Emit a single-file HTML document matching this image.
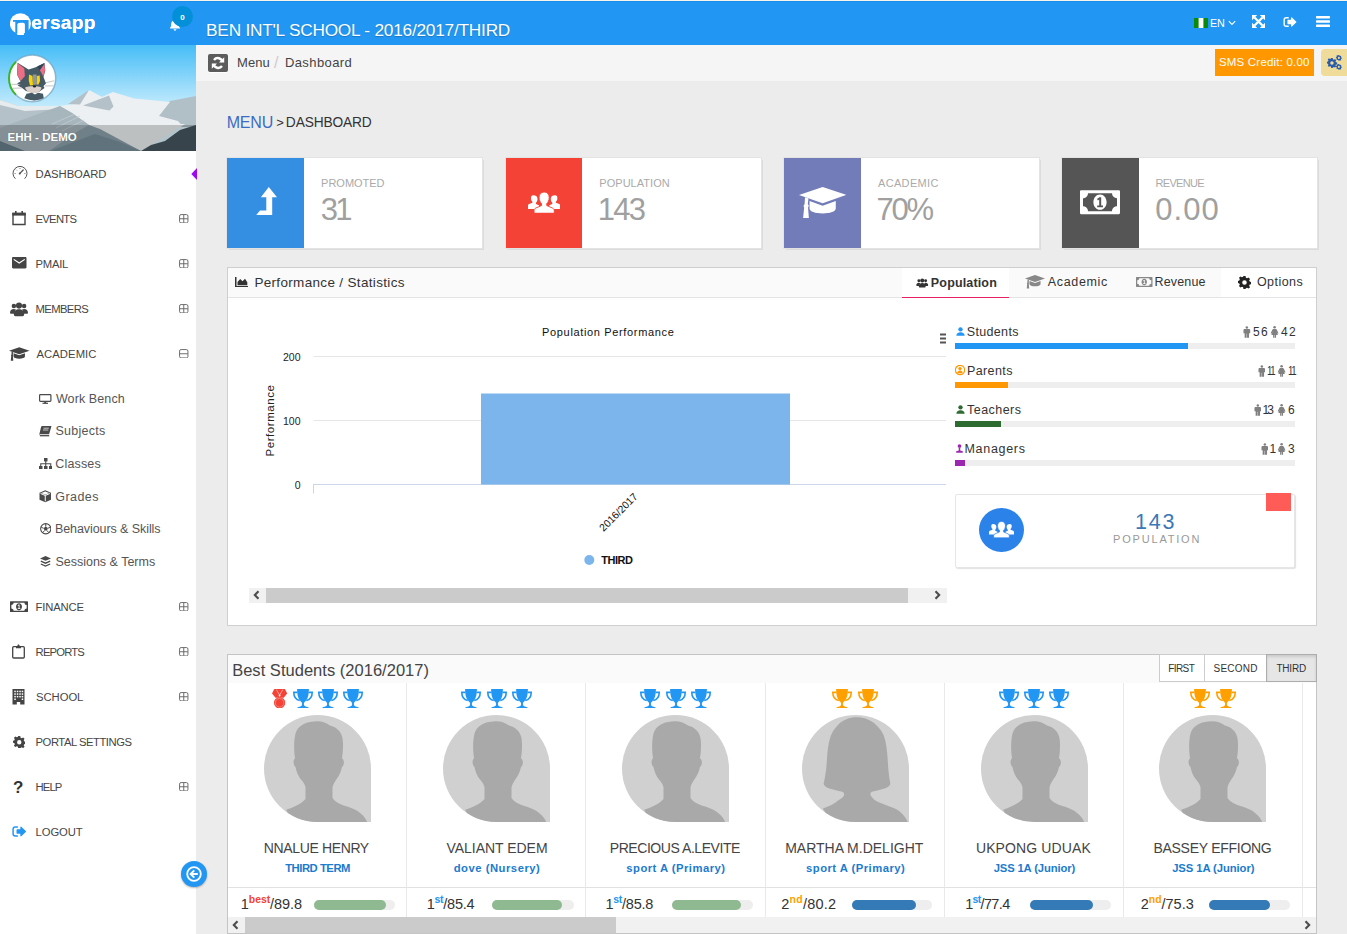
<!DOCTYPE html>
<html lang="en"><head><meta charset="utf-8"><title>Nersapp - Dashboard</title>
<style>
html,body{margin:0;padding:0}
body{width:1347px;height:934px;overflow:hidden;position:relative;background:#ececec;font-family:"Liberation Sans",sans-serif;}
#app{position:absolute;left:0;top:0;width:1347px;height:934px;overflow:hidden}
.t{position:absolute;white-space:nowrap;}
</style></head>
<body><div id="app">
<div style="position:absolute;left:196px;top:45px;width:1151px;height:36px;background:#f5f5f5;"></div>
<div style="position:absolute;left:208px;top:54px;width:20px;height:18px;background:#5c5c5c;border-radius:2px;box-shadow:0 1px 0 rgba(255,255,255,.9);"><svg width="20" height="18" viewBox="0 0 20 18" style="position:absolute;left:0;top:0"><g fill="none" stroke="#fff" stroke-width="2.400"><path d="M14.600 8A4.900 4.900 0 006 5.900"/><path d="M5.400 10a4.900 4.900 0 008.600 2.100"/></g><path d="M16.200 3.300v5.200H11zM3.800 14.700V9.500H9z" fill="#fff"/></svg></div>
<span class="t" style="left:236.93px;top:53.50px;font-size:13px;line-height:18px;color:#444;letter-spacing:0.137px;">Menu</span>
<span class="t" style="left:274.00px;top:51.50px;font-size:16px;line-height:22px;color:#ccc;">/</span>
<span class="t" style="left:284.93px;top:53.50px;font-size:13px;line-height:18px;color:#444;letter-spacing:0.413px;">Dashboard</span>
<div style="position:absolute;left:1215px;top:49px;width:99px;height:27px;background:#ff9800;"></div>
<span class="t" style="left:1218.98px;top:54.00px;font-size:11.5px;line-height:16px;color:#fff;letter-spacing:0.194px;">SMS Credit: 0.00</span>
<div style="position:absolute;left:1321px;top:49px;width:26px;height:27px;background:#f0dc9a;border-radius:4px 0 0 4px;"></div>
<svg style="position:absolute;left:1326.5px;top:55px;" width="16" height="15" viewBox="0 0 16 15"><g transform="translate(0,3) scale(.62)"><path fill="#2a5caa" fill-rule="evenodd" d="M6.700 0h2.600l.4 2.100c.5.200 1 .4 1.400.7l1.900-1 1.800 1.800-1.100 1.800c.3.500.5 1 .7 1.500l2 .5v2.500l-2 .5c-.2.500-.4 1-.7 1.500l1.100 1.800-1.800 1.800-1.900-1c-.4.300-.9.500-1.400.7L9.300 16H6.700l-.4-2.100c-.5-.2-1-.4-1.400-.7l-1.900 1-1.800-1.800 1.100-1.800c-.3-.5-.5-1-.7-1.500l-2-.5V6.100l2-.5c.2-.5.400-1 .7-1.500L1.200 2.300 3 .5l1.900 1c.4-.3.900-.5 1.400-.7zM8 5.200a2.800 2.800 0 100 5.600 2.800 2.800 0 000-5.600z"/></g><g transform="translate(9,0) scale(.36)"><path fill="#2a5caa" fill-rule="evenodd" d="M6.700 0h2.600l.4 2.100c.5.200 1 .4 1.400.7l1.900-1 1.800 1.800-1.100 1.800c.3.500.5 1 .7 1.500l2 .5v2.500l-2 .5c-.2.500-.4 1-.7 1.500l1.100 1.800-1.800 1.800-1.900-1c-.4.300-.9.500-1.400.7L9.300 16H6.700l-.4-2.100c-.5-.2-1-.4-1.400-.7l-1.900 1-1.800-1.800 1.100-1.800c-.3-.5-.5-1-.7-1.500l-2-.5V6.100l2-.5c.2-.5.400-1 .7-1.500L1.200 2.300 3 .5l1.900 1c.4-.3.900-.5 1.400-.7zM8 5.200a2.800 2.800 0 100 5.600 2.800 2.800 0 000-5.600z"/></g><g transform="translate(9,9) scale(.36)"><path fill="#2a5caa" fill-rule="evenodd" d="M6.700 0h2.600l.4 2.100c.5.200 1 .4 1.400.7l1.900-1 1.800 1.800-1.100 1.800c.3.500.5 1 .7 1.500l2 .5v2.500l-2 .5c-.2.500-.4 1-.7 1.500l1.100 1.800-1.800 1.800-1.900-1c-.4.300-.9.500-1.400.7L9.300 16H6.700l-.4-2.100c-.5-.2-1-.4-1.400-.7l-1.900 1-1.800-1.800 1.100-1.800c-.3-.5-.5-1-.7-1.500l-2-.5V6.100l2-.5c.2-.5.400-1 .7-1.500L1.200 2.300 3 .5l1.900 1c.4-.3.900-.5 1.400-.7zM8 5.200a2.800 2.800 0 100 5.600 2.800 2.800 0 000-5.600z"/></g></svg>
<div style="position:absolute;left:0px;top:45px;width:196px;height:889px;background:#fff;"></div>
<svg style="position:absolute;left:0px;top:45px;" width="196" height="106" viewBox="0 0 196 106"><defs><linearGradient id="sky" x1="0" y1="0" x2="0" y2="1"><stop offset="0" stop-color="#45bdf7"/><stop offset=".5" stop-color="#b3e5fc"/><stop offset=".75" stop-color="#e0f4fd"/></linearGradient></defs><rect width="196" height="106" fill="url(#sky)"/><path d="M158 71L170 56 196 51V82H182z" fill="#b1bfc6"/><path d="M59 61l20-2.500 10-13.500 13 7 11-5 21 6.500 36 3.500-11 14 19 5 4.500 5H88z" fill="#edf0f2"/><path d="M88 79h97l-44 27H88z" fill="#edf0f2"/><path d="M68 59L89 45l-9 14.500z" fill="#b4c1c8"/><path d="M83 60.500l26-10 4.500 11-4 4z" fill="#b4c1c8"/><path d="M0 55l19 6 40 0 13 7 17 12v26H0z" fill="#b4c1c8"/><path d="M0 55l19 6 40 0 2 3-36 2L0 60z" fill="#e6ebee"/><path d="M0 83l60-22 12 7 17 12-39 26H0z" fill="#a7b5bc"/><path d="M52 79l22-9.500M56 83l24-12M62 86l22-11" stroke="#c5d0d5" stroke-width=".7" fill="none"/><path d="M49 106l26-18 14-8 11 4 41 22z" fill="#8ba0ab"/><path d="M50 106l45-17 25 8 21 9z" fill="#79909c"/><path d="M0 96l25 10H0z" fill="#677e8a"/><path d="M141 106l10-6 14-4 15-11 16-5v26z" fill="#45565f"/><rect y="80" width="196" height="26" fill="#000" opacity=".2"/></svg>
<svg style="position:absolute;left:8.2px;top:54px;overflow:visible" width="48.6" height="48.6" viewBox="0 0 48.600 48.600"><circle cx="24.300" cy="24.300" r="23.400" fill="#fff" stroke="#6fa3bf" stroke-width="1.500" stroke-opacity=".7"/><path d="M8 7.700A23.200 23.200 0 008 40.900" fill="none" stroke="#3cb521" stroke-width="1.900"/><path d="M9.600 8.800L20.600 15.600 27 13.500 29.300 12.500 36.600 8.900 37.300 16.500 35.500 23 38 29.500 35.500 32 36.500 34 31.500 37.500 26 39 18 37 13.500 33.500 9.500 31.500 12 30.500 9 29.500 12.500 27.500 9 20.500z" fill="#455a64"/><path d="M9.800 9.300L16.300 14.600 16.900 22 12.600 27 9.200 20.500z" fill="#ec6f86"/><path d="M29.300 12.500L36.500 9 32 16.300z" fill="#2d4356"/><path d="M36.500 9.800L31.900 16.300 35.400 22.500 37 16.300z" fill="#ec6f86"/><path d="M21 20.500l3.500 1.500.5 9-3 .5-1.300-5.500z" fill="#fad207"/><path d="M28.700 22l3-.5.300 5.500-1.500 3.500h-2z" fill="#fad207"/><path d="M24.800 20.500h3.800v10L25 31z" fill="#90989c"/><path d="M17 33.500C20 32 31 32 33.500 33.500 33 37 30 39 25.500 39S18 37 17 33.500z" fill="#dbd0cb"/><ellipse cx="26.500" cy="32.400" rx="1.700" ry="1" fill="#222"/><path d="M16.300 44.300L18.500 39.800 24 38.800 27 40.500 30 38.800 35 39.800 35.800 44.300Q26 48.500 16.300 44.300z" fill="#455a64"/><path d="M3.500 30.300L13 30.500M5 34.300L14 34M37.500 28.800L46 26.800M37 32L45.500 31.800" stroke="#8a8a8a" stroke-width=".5"/></svg>
<span class="t" style="left:7.53px;top:129.00px;font-size:11.5px;line-height:16px;color:#fff;letter-spacing:0.028px;font-weight:700;text-shadow:0 0 1px rgba(0,0,0,.3);">EHH - DEMO</span>
<span class="t" style="left:35.58px;top:166.00px;font-size:11.25px;line-height:16px;color:#454545;letter-spacing:-0.050px;">DASHBOARD</span>
<span class="t" style="left:35.58px;top:211.00px;font-size:11.25px;line-height:16px;color:#454545;letter-spacing:-0.734px;">EVENTS</span>
<span class="t" style="left:35.58px;top:256.00px;font-size:11.25px;line-height:16px;color:#454545;letter-spacing:-0.241px;">PMAIL</span>
<span class="t" style="left:35.58px;top:301.00px;font-size:11.25px;line-height:16px;color:#454545;letter-spacing:-0.624px;">MEMBERS</span>
<span class="t" style="left:36.48px;top:346.00px;font-size:11.25px;line-height:16px;color:#454545;letter-spacing:0.081px;">ACADEMIC</span>
<span class="t" style="left:35.58px;top:599.00px;font-size:11.25px;line-height:16px;color:#454545;letter-spacing:-0.145px;">FINANCE</span>
<span class="t" style="left:35.58px;top:644.00px;font-size:11.25px;line-height:16px;color:#454545;letter-spacing:-0.823px;">REPORTS</span>
<span class="t" style="left:35.99px;top:689.00px;font-size:11.25px;line-height:16px;color:#454545;letter-spacing:-0.025px;">SCHOOL</span>
<span class="t" style="left:35.58px;top:734.00px;font-size:11.25px;line-height:16px;color:#454545;letter-spacing:-0.471px;">PORTAL SETTINGS</span>
<span class="t" style="left:35.58px;top:779.00px;font-size:11.25px;line-height:16px;color:#454545;letter-spacing:-0.891px;">HELP</span>
<span class="t" style="left:35.58px;top:824.00px;font-size:11.25px;line-height:16px;color:#454545;letter-spacing:-0.105px;">LOGOUT</span>
<svg style="position:absolute;left:179px;top:213.5px;" width="9.5" height="9.5" viewBox="0 0 10 10"><rect x=".6" y=".6" width="8.800" height="8.800" rx="1.600" fill="none" stroke="#666" stroke-width="1"/><path d="M.8 5h8.400" stroke="#666" stroke-width="1"/><path d="M5 .8v8.400" stroke="#666" stroke-width="1"/></svg>
<svg style="position:absolute;left:179px;top:258.5px;" width="9.5" height="9.5" viewBox="0 0 10 10"><rect x=".6" y=".6" width="8.800" height="8.800" rx="1.600" fill="none" stroke="#666" stroke-width="1"/><path d="M.8 5h8.400" stroke="#666" stroke-width="1"/><path d="M5 .8v8.400" stroke="#666" stroke-width="1"/></svg>
<svg style="position:absolute;left:179px;top:303.5px;" width="9.5" height="9.5" viewBox="0 0 10 10"><rect x=".6" y=".6" width="8.800" height="8.800" rx="1.600" fill="none" stroke="#666" stroke-width="1"/><path d="M.8 5h8.400" stroke="#666" stroke-width="1"/><path d="M5 .8v8.400" stroke="#666" stroke-width="1"/></svg>
<svg style="position:absolute;left:179px;top:348.5px;" width="9.5" height="9.5" viewBox="0 0 10 10"><rect x=".6" y=".6" width="8.800" height="8.800" rx="1.600" fill="none" stroke="#666" stroke-width="1"/><path d="M.8 5h8.400" stroke="#666" stroke-width="1"/></svg>
<svg style="position:absolute;left:179px;top:601.5px;" width="9.5" height="9.5" viewBox="0 0 10 10"><rect x=".6" y=".6" width="8.800" height="8.800" rx="1.600" fill="none" stroke="#666" stroke-width="1"/><path d="M.8 5h8.400" stroke="#666" stroke-width="1"/><path d="M5 .8v8.400" stroke="#666" stroke-width="1"/></svg>
<svg style="position:absolute;left:179px;top:646.5px;" width="9.5" height="9.5" viewBox="0 0 10 10"><rect x=".6" y=".6" width="8.800" height="8.800" rx="1.600" fill="none" stroke="#666" stroke-width="1"/><path d="M.8 5h8.400" stroke="#666" stroke-width="1"/><path d="M5 .8v8.400" stroke="#666" stroke-width="1"/></svg>
<svg style="position:absolute;left:179px;top:691.5px;" width="9.5" height="9.5" viewBox="0 0 10 10"><rect x=".6" y=".6" width="8.800" height="8.800" rx="1.600" fill="none" stroke="#666" stroke-width="1"/><path d="M.8 5h8.400" stroke="#666" stroke-width="1"/><path d="M5 .8v8.400" stroke="#666" stroke-width="1"/></svg>
<svg style="position:absolute;left:179px;top:781.5px;" width="9.5" height="9.5" viewBox="0 0 10 10"><rect x=".6" y=".6" width="8.800" height="8.800" rx="1.600" fill="none" stroke="#666" stroke-width="1"/><path d="M.8 5h8.400" stroke="#666" stroke-width="1"/><path d="M5 .8v8.400" stroke="#666" stroke-width="1"/></svg>
<svg style="position:absolute;left:190.5px;top:167.5px;" width="6" height="12" viewBox="0 0 6 12"><path d="M6 0v12L.3 6z" fill="#9d0af2"/></svg>
<svg style="position:absolute;left:11.5px;top:165.5px;" width="16" height="15" viewBox="0 0 16 15"><path d="M3.400 12.700A7 7 0 1112.600 12.700" fill="none" stroke="#555" stroke-width="1"/><path d="M7.600 7.600L11.200 4" stroke="#555" stroke-width="1.300" stroke-linecap="round"/><circle cx="7.800" cy="7.600" r="1" fill="#555"/><path d="M2.600 7.500h1M12.400 7.500h1M8 2.100v1M4.200 3.700l.7.700" stroke="#555" stroke-width=".8"/></svg>
<svg style="position:absolute;left:12px;top:211px;" width="14" height="14.5" viewBox="0 0 14 14.5"><path d="M1 2.500h12v11H1z" fill="none" stroke="#444" stroke-width="1.400"/><rect x=".3" y="1.800" width="13.400" height="2.800" fill="#444"/><rect x="3" y="0" width="1.600" height="2.500" fill="#444"/><rect x="9.400" y="0" width="1.600" height="2.500" fill="#444"/></svg>
<svg style="position:absolute;left:12px;top:257px;" width="14.5" height="11.5" viewBox="0 0 14.500 11.500"><path d="M1.200 0h12.100c.7 0 1.200.5 1.200 1.200v9.100c0 .7-.5 1.200-1.200 1.200H1.200C.5 11.500 0 11 0 10.300V1.200C0 .5.500 0 1.200 0zm.5 1.700v1.400l5.550 3.600 5.550-3.600V1.700L7.250 5.300z" fill="#444" fill-rule="evenodd"/></svg>
<svg style="position:absolute;left:10px;top:301px;" width="18" height="16" viewBox="0 0 20 16"><g fill="#444"><circle cx="4.3" cy="4.6" r="2.5"/><circle cx="15.7" cy="4.6" r="2.5"/><path d="M0 12.2c0-2.6 1.6-4.3 4.3-4.3 1 0 1.8.3 2.4.8-.9 1-1.4 2.400-1.400 3.900v.7H.9c-.5 0-.9-.4-.9-1.100z"/><path d="M20 12.2c0-2.6-1.6-4.3-4.3-4.3-1 0-1.800.3-2.400.8.9 1 1.400 2.400 1.400 3.900v.7h4.400c.5 0 .9-.4.900-1.100z"/><circle cx="10" cy="4.200" r="3.400"/><path d="M4.300 14.200c0-3.500 2.200-5.800 5.700-5.800s5.700 2.300 5.700 5.800c0 1-.7 1.800-1.700 1.800H6c-1 0-1.700-.8-1.700-1.800z"/></g></svg>
<svg style="position:absolute;left:9px;top:347px;" width="20.5" height="14" viewBox="0 0 22 14.600"><g fill="#444"><path d="M11 0L22 3.700 11 7.600 0 3.700z"/><path d="M4.900 6.500L11 8.700l6.100-2.200V10c0 1.400-2.700 2.300-6.100 2.300S4.900 11.400 4.900 10z"/><path d="M2.800 4.800l1.600.6-.3 2.600c.5.300.6 1 .1 1.500l.4 5.100H1.900l.5-5.100c-.4-.5-.3-1.200.2-1.500z"/></g></svg>
<svg style="position:absolute;left:10px;top:600.5px;" width="18" height="11.5" viewBox="0 0 20 12"><path fill="#444" fill-rule="evenodd" d="M.6 0h18.800c.3 0 .6.300.6.600v10.800c0 .3-.3.600-.6.600H.6a.6.600 0 01-.6-.6V.6C0 .3.300 0 .6 0zM4 1.500C4 2.900 2.900 4 1.500 4v4C2.900 8 4 9.100 4 10.500h12c0-1.400 1.100-2.500 2.500-2.500V4A2.500 2.500 0 0116 1.500zM10 2.200c1.900 0 3.300 1.700 3.300 3.800S11.900 9.800 10 9.800 6.700 8.100 6.700 6 8.100 2.200 10 2.200zM9.700 3.500l-1.200.9.500.7.600-.4v2.900h-1v.9h2.900v-.9h-.9V3.500z"/></svg>
<svg style="position:absolute;left:12px;top:644px;" width="13" height="14.5" viewBox="0 0 13 14.500"><path d="M1.700 2.700h9.600c.6 0 1 .4 1 1V13c0 .6-.4 1-1 1H1.700c-.6 0-1-.4-1-1V3.700c0-.6.400-1 1-1z" fill="none" stroke="#444" stroke-width="1.300"/><path d="M4 4.300V2.200h1.300C5.300 1.200 5.800.5 6.500.5s1.200.7 1.200 1.700H9v2.100z" fill="#444"/></svg>
<svg style="position:absolute;left:12px;top:689px;" width="13" height="15.5" viewBox="0 0 13 15.500"><path d="M.5 0h12v15.500h-4.300V13H4.800v2.500H.5z" fill="#444"/><g fill="#fff"><rect x="2.300" y="1.700" width="1.500" height="1.500"/><rect x="4.800" y="1.700" width="1.500" height="1.500"/><rect x="7.300" y="1.700" width="1.500" height="1.500"/><rect x="9.700" y="1.700" width="1.500" height="1.500"/><rect x="2.300" y="4.300" width="1.500" height="1.500"/><rect x="4.800" y="4.300" width="1.500" height="1.500"/><rect x="7.300" y="4.300" width="1.500" height="1.500"/><rect x="9.700" y="4.300" width="1.500" height="1.500"/><rect x="2.300" y="6.900" width="1.500" height="1.500"/><rect x="4.800" y="6.900" width="1.500" height="1.500"/><rect x="7.300" y="6.900" width="1.500" height="1.500"/><rect x="9.700" y="6.900" width="1.500" height="1.500"/><rect x="2.300" y="9.500" width="1.500" height="1.500"/><rect x="9.700" y="9.500" width="1.500" height="1.500"/></g></svg>
<svg style="position:absolute;left:12.5px;top:735.5px;" width="12.5" height="12.5" viewBox="0 0 16 16"><path fill="#444" fill-rule="evenodd" d="M6.700 0h2.600l.4 2.100c.5.200 1 .4 1.400.7l1.900-1 1.800 1.800-1.100 1.800c.3.500.5 1 .7 1.500l2 .5v2.500l-2 .5c-.2.500-.4 1-.7 1.500l1.100 1.800-1.800 1.800-1.900-1c-.4.300-.9.500-1.400.7L9.300 16H6.700l-.4-2.100c-.5-.2-1-.4-1.400-.7l-1.900 1-1.800-1.800 1.100-1.800c-.3-.5-.5-1-.7-1.500l-2-.5V6.100l2-.5c.2-.5.400-1 .7-1.500L1.200 2.300 3 .5l1.900 1c.4-.3.900-.5 1.400-.7zM8 5.200a2.800 2.800 0 100 5.600 2.800 2.800 0 000-5.600z"/></svg>
<span class="t" style="left:13.02px;top:776.50px;font-size:17px;line-height:22px;color:#333;font-weight:700;">?</span>
<svg style="position:absolute;left:11.5px;top:825px;" width="14.5" height="13" viewBox="0 0 16 14"><g fill="#2196f3"><path d="M6.500 1.200v1.600H3.600c-.9 0-1.600.7-1.600 1.600v5.200c0 .9.700 1.600 1.600 1.600h2.900v1.600H3.600A3.200 3.200 0 01.4 9.600V4.400a3.200 3.200 0 013.200-3.200z"/><path d="M10.300 1.700L15.700 7l-5.400 5.300c-.4.400-1.100.1-1.100-.5V9.500H5.700c-.4 0-.7-.3-.7-.7V5.200c0-.4.300-.7.7-.7h3.500V2.200c0-.6.700-.9 1.100-.5z"/></g></svg>
<span class="t" style="left:55.95px;top:391.00px;font-size:12.5px;line-height:16px;color:#555;letter-spacing:0.102px;">Work Bench</span>
<span class="t" style="left:55.43px;top:423.00px;font-size:12.5px;line-height:16px;color:#555;letter-spacing:0.282px;">Subjects</span>
<span class="t" style="left:55.37px;top:456.00px;font-size:12.5px;line-height:16px;color:#555;letter-spacing:0.138px;">Classes</span>
<span class="t" style="left:55.37px;top:489.00px;font-size:12.5px;line-height:16px;color:#555;letter-spacing:0.418px;">Grades</span>
<span class="t" style="left:54.97px;top:521.00px;font-size:12.5px;line-height:16px;color:#555;letter-spacing:-0.078px;">Behaviours &amp; Skills</span>
<span class="t" style="left:55.43px;top:554.00px;font-size:12.5px;line-height:16px;color:#555;letter-spacing:-0.006px;">Sessions &amp; Terms</span>
<svg style="position:absolute;left:39px;top:393.5px;" width="12.5" height="10" viewBox="0 0 12.500 10"><rect x=".6" y=".6" width="11.300" height="6.800" rx=".8" fill="none" stroke="#4a4a4a" stroke-width="1.200"/><path d="M3.500 9.300h5.500" stroke="#4a4a4a" stroke-width="1.200"/><path d="M5.300 7.500h1.900v1.500H5.300z" fill="#4a4a4a"/></svg>
<svg style="position:absolute;left:39px;top:425.5px;" width="12.5" height="11" viewBox="0 0 12.500 11"><path d="M3.200 0h9.300L10.100 8.200H1.600C.7 8.200 0 8.900 0 9.600L2 1.200C2.200.4 2.600 0 3.200 0z" fill="#4a4a4a"/><path d="M.9 9.700h9.300" stroke="#4a4a4a" stroke-width="1.300"/><path d="M4.500 2.200h5.300M4 4h5.300" stroke="#fff" stroke-width=".7"/></svg>
<svg style="position:absolute;left:38.5px;top:457.5px;" width="13.5" height="11.5" viewBox="0 0 13.500 11.500"><g fill="#4a4a4a"><rect x="5" y="0" width="3.500" height="3.400"/><rect x="0" y="8" width="3.500" height="3.400"/><rect x="5" y="8" width="3.500" height="3.400"/><rect x="10" y="8" width="3.500" height="3.400"/></g><path d="M6.750 3v5M1.750 8V5.800h10V8" fill="none" stroke="#4a4a4a" stroke-width="1.100"/></svg>
<svg style="position:absolute;left:39px;top:490px;" width="12.5" height="12.5" viewBox="0 0 12.500 12.500"><path d="M6.250.3L12 2.800v6.900l-5.750 2.500L.5 9.700V2.800z" fill="#4a4a4a"/><path d="M1.600 3.500l4.650 2 4.650-2M6.250 5.500v5.800" fill="none" stroke="#fff" stroke-width="1"/><path d="M6.250 1.400l4 1.700-4 1.700-4-1.700z" fill="#fff"/></svg>
<svg style="position:absolute;left:39.5px;top:523px;" width="11.5" height="11.5" viewBox="0 0 11.500 11.500"><circle cx="5.750" cy="5.750" r="5.100" fill="none" stroke="#4a4a4a" stroke-width="1.100"/><path d="M5.750 3.600l2.100 1.500-.8 2.400H4.450l-.8-2.400z" fill="#4a4a4a"/><path d="M5.750 1v2.600M1.300 4.400l2.300.8M10.200 4.400l-2.300.8M2.900 9.600l1.500-2M8.600 9.600l-1.500-2" stroke="#4a4a4a" stroke-width="1"/></svg>
<svg style="position:absolute;left:40px;top:556px;" width="11" height="11.5" viewBox="0 0 11 11.500"><path d="M5.500 0L11 2.400 5.500 4.800 0 2.400z" fill="#4a4a4a"/><path d="M.8 5.200l4.700 2 4.700-2M.8 8l4.700 2 4.700-2" fill="none" stroke="#4a4a4a" stroke-width="1.300"/></svg>
<div style="position:absolute;left:181px;top:861px;width:26px;height:26px;border-radius:50%;background:#2196f3;box-shadow:0 1px 2px rgba(0,0,0,.3);z-index:5;"><svg width="26" height="26" viewBox="0 0 26 26" style="position:absolute;left:0;top:0"><circle cx="13" cy="13" r="6.800" fill="none" stroke="#fff" stroke-width="1.800"/><path d="M13.300 9.300L9.600 13l3.700 3.700M9.800 13h7" fill="none" stroke="#fff" stroke-width="1.900"/></svg></div>
<div style="position:absolute;left:0px;top:0px;width:1347px;height:1px;background:#fcf3e8;"></div>
<div class="hdr" style="position:absolute;left:0px;top:1px;width:1347px;height:44px;background:#2196f3;border-top:1px solid #178ef0;box-sizing:border-box;"></div>
<svg style="position:absolute;left:9.8px;top:12.8px;" width="21" height="22" viewBox="0 0 21 22"><circle cx="10.400" cy="10.700" r="10.500" fill="#fff"/><path d="M3 7.100h15.600V20h-3.700v-8.300c0-1.100-.7-1.900-1.800-1.900h-3c-1.100 0-1.800.8-1.800 1.900V20H5.300V8.700H3z" fill="#2196f3"/><path d="M7.300 22v-10.200c0-1.100.7-1.900 1.800-1.900h3c1.100 0 1.800.8 1.800 1.900V22z" fill="#fff"/></svg>
<span class="t" style="left:31.26px;top:9.50px;font-size:19px;line-height:26px;color:#fff;letter-spacing:0.343px;font-weight:700;text-shadow:0 0 .6px #fff;">ersapp</span>
<svg style="position:absolute;left:170px;top:19px;" width="10" height="12" viewBox="0 0 10 12"><path d="M5 0c.5 0 .9.400.9.900v.4c1.700.4 2.900 1.900 2.900 3.700 0 2.300.5 3.200 1.200 3.900v.6H0v-.6c.7-.7 1.200-1.600 1.200-3.900 0-1.800 1.200-3.300 2.900-3.700V.9C4.100.4 4.500 0 5 0zM3.600 10.300h2.800c0 .8-.6 1.400-1.400 1.400s-1.400-.6-1.400-1.400z" fill="#fff"/></svg>
<div style="position:absolute;left:172px;top:6px;width:21px;height:21px;border-radius:50%;background:#0390d8;"></div>
<span class="t" style="left:180.28px;top:12.50px;font-size:8px;line-height:10px;color:#fff;font-weight:700;">0</span>
<span class="t" style="left:206.08px;top:19.00px;font-size:17.25px;line-height:22px;color:#fff;letter-spacing:-0.225px;text-shadow:0 1px 1px rgba(0,0,0,.2);">BEN INT'L SCHOOL - 2016/2017/THIRD</span>
<svg style="position:absolute;left:1194px;top:18px;" width="14" height="10" viewBox="0 0 14 10"><rect width="14" height="10" fill="#0a8a0a"/><rect x="4.600" width="4.800" height="10" fill="#fff"/></svg>
<span class="t" style="left:1210.12px;top:16.00px;font-size:10.75px;line-height:14px;color:#fff;letter-spacing:-0.175px;">EN</span>
<svg style="position:absolute;left:1228px;top:20px;" width="8" height="6" viewBox="0 0 8 6"><path d="M.8 1.200L4 4.400l3.200-3.200" fill="none" stroke="#fff" stroke-width="1.100"/></svg>
<svg style="position:absolute;left:1252px;top:15px;" width="13" height="13" viewBox="0 0 13 13"><path d="M2.500 2.500l8 8M10.500 2.500l-8 8" stroke="#fff" stroke-width="2.300" fill="none"/><g fill="#fff"><path d="M0 0h5.200L0 5.200zM13 0v5.200L7.800 0zM0 13V7.800L5.200 13zM13 13H7.800L13 7.800z"/></g></svg>
<svg style="position:absolute;left:1283px;top:15.5px;" width="14" height="12" viewBox="0 0 16 14"><g fill="#fff"><path d="M6.500 1.200v1.600H3.600c-.9 0-1.600.7-1.600 1.600v5.200c0 .9.700 1.600 1.600 1.600h2.900v1.600H3.600A3.200 3.200 0 01.4 9.600V4.400a3.200 3.200 0 013.200-3.200z"/><path d="M10.300 1.700L15.700 7l-5.400 5.300c-.4.400-1.100.1-1.100-.5V9.500H5.700c-.4 0-.7-.3-.7-.7V5.200c0-.4.300-.7.7-.7h3.500V2.200c0-.6.700-.9 1.100-.5z"/></g></svg>
<svg style="position:absolute;left:1316px;top:16px;" width="14" height="11" viewBox="0 0 14 11"><g fill="#fff"><rect width="14" height="2.400" rx=".6"/><rect y="4.300" width="14" height="2.400" rx=".6"/><rect y="8.600" width="14" height="2.400" rx=".6"/></g></svg>
<span class="t" style="left:226.69px;top:111.50px;font-size:16.0px;line-height:22px;color:#3b6cc4;letter-spacing:-0.188px;">MENU</span>
<span class="t" style="left:276.36px;top:113.50px;font-size:13px;line-height:18px;color:#333;">&gt;</span>
<span class="t" style="left:285.87px;top:113.50px;font-size:13.75px;line-height:18px;color:#333;letter-spacing:-0.164px;">DASHBOARD</span>
<div style="position:absolute;left:227.4px;top:158px;width:255px;height:90px;background:#fff;box-shadow:0 0 0 1px #e3e3e3,2px 2px 0 0 #dcdcdc;"></div>
<div style="position:absolute;left:227.4px;top:158px;width:76.5px;height:90px;background:#348fe2;"></div>
<span class="t" style="left:321.10px;top:176.00px;font-size:11px;line-height:14px;color:#aaa;letter-spacing:-0.018px;">PROMOTED</span>
<span class="t" style="left:320.82px;top:189.50px;font-size:31px;line-height:40px;color:#a0a0a0;letter-spacing:-2.787px;">31</span>
<svg style="position:absolute;left:255.6px;top:186.6px;" width="21.2" height="28.4" viewBox="0 0 21.200 28.400"><path d="M12.800 0L21.100 10.300H16.200V28.300H0L4 23.600H10.300V10.300H4.900z" fill="#fff"/></svg>
<div style="position:absolute;left:505.7px;top:158px;width:255px;height:90px;background:#fff;box-shadow:0 0 0 1px #e3e3e3,2px 2px 0 0 #dcdcdc;"></div>
<div style="position:absolute;left:505.7px;top:158px;width:76.5px;height:90px;background:#f44336;"></div>
<span class="t" style="left:599.30px;top:176.00px;font-size:11px;line-height:14px;color:#aaa;letter-spacing:0.035px;">POPULATION</span>
<span class="t" style="left:597.84px;top:189.50px;font-size:31px;line-height:40px;color:#a0a0a0;letter-spacing:-1.749px;">143</span>
<svg style="position:absolute;left:527.7px;top:191.7px;" width="32.3" height="21.3" viewBox="0 0 32 21"><g fill="#fff"><path d="M6.500 3.500c1.800 0 2.900 1.400 2.900 3.300 0 1.600-.6 3-1.500 3.700v1.300l3 1.400v3.600H0v-3.300c0-.8.400-1.300 1.100-1.600l3.300-1.400v-1c-.9-.7-1.500-2.100-1.500-3.700 0-1.900 1.500-3.300 3.600-2.300zM25.500 3.500c-1.800 0-2.900 1.400-2.900 3.300 0 1.600.6 3 1.500 3.700v1.300l-3 1.400v3.600H32v-3.300c0-.8-.4-1.300-1.100-1.600l-3.300-1.400v-1c.9-.7 1.500-2.100 1.500-3.700 0-1.900-1.500-3.300-3.600-2.300z"/><path d="M16 0c3.200 0 5 2.300 5 5.400 0 2.600-1 4.900-2.400 6v2l5.800 2.500c1 .5 1.600 1.300 1.600 2.400V21H6v-2.700c0-1.100.6-1.900 1.600-2.400l5.800-2.500v-2C12 10.300 11 8 11 5.400 11 2.300 12.800 0 16 0z" stroke="#f44336" stroke-width=".9"/></g></svg>
<div style="position:absolute;left:784px;top:158px;width:255px;height:90px;background:#fff;box-shadow:0 0 0 1px #e3e3e3,2px 2px 0 0 #dcdcdc;"></div>
<div style="position:absolute;left:784px;top:158px;width:76.5px;height:90px;background:#727cb8;"></div>
<span class="t" style="left:877.98px;top:176.00px;font-size:11px;line-height:14px;color:#aaa;letter-spacing:0.340px;">ACADEMIC</span>
<span class="t" style="left:876.41px;top:189.50px;font-size:31px;line-height:40px;color:#a0a0a0;letter-spacing:-2.176px;">70%</span>
<svg style="position:absolute;left:798.8px;top:186.6px;" width="47.3" height="31.4" viewBox="0 0 22 14.600"><g fill="#fff"><path d="M11 0L22 3.700 11 7.600 0 3.700z"/><path d="M4.900 6.500L11 8.700l6.100-2.200V10c0 1.400-2.700 2.300-6.100 2.300S4.900 11.400 4.900 10z"/><path d="M2.800 4.800l1.600.6-.3 2.600c.5.300.6 1 .1 1.500l.4 5.100H1.900l.5-5.100c-.4-.5-.3-1.200.2-1.500z"/></g></svg>
<div style="position:absolute;left:1062.3px;top:158px;width:255px;height:90px;background:#fff;box-shadow:0 0 0 1px #e3e3e3,2px 2px 0 0 #dcdcdc;"></div>
<div style="position:absolute;left:1062.3px;top:158px;width:76.5px;height:90px;background:#555;"></div>
<span class="t" style="left:1155.60px;top:176.00px;font-size:11px;line-height:14px;color:#aaa;letter-spacing:-0.717px;">REVENUE</span>
<span class="t" style="left:1155.29px;top:189.50px;font-size:31px;line-height:40px;color:#a0a0a0;letter-spacing:1.029px;">0.00</span>
<svg style="position:absolute;left:1080.2px;top:188.7px;overflow:visible" width="40" height="26.4" viewBox="0 0 20 12"><path fill="#fff" fill-rule="evenodd" d="M.6 0h18.800c.3 0 .6.300.6.600v10.800c0 .3-.3.600-.6.600H.6a.6.600 0 01-.6-.6V.6C0 .3.300 0 .6 0zM4 1.500C4 2.900 2.900 4 1.500 4v4C2.900 8 4 9.100 4 10.500h12c0-1.400 1.100-2.500 2.500-2.500V4A2.500 2.500 0 0116 1.500zM10 2.200c1.900 0 3.300 1.700 3.300 3.800S11.900 9.800 10 9.800 6.700 8.100 6.700 6 8.100 2.200 10 2.200zM9.700 3.500l-1.200.9.500.7.600-.4v2.900h-1v.9h2.900v-.9h-.9V3.500z"/></svg>
<div style="position:absolute;left:227px;top:267px;width:1088px;height:357px;background:#fff;border:1px solid #cfcfcf;"></div>
<div style="position:absolute;left:228px;top:268px;width:1088px;height:29px;background:#fafafa;border-bottom:1px solid #e4e4e4;"></div>
<svg style="position:absolute;left:235px;top:276.5px;" width="13" height="10.5" viewBox="0 0 13 10.500"><path d="M0 0h1.500v9H13v1.500H0z" fill="#333"/><path d="M2.500 8.200V5l2.700-3 2.300 2.200L10 1.800l2.300 3.400v3z" fill="#333"/></svg>
<span class="t" style="left:254.39px;top:273.50px;font-size:13.5px;line-height:18px;color:#333;letter-spacing:0.328px;">Performance / Statistics</span>
<div style="position:absolute;left:902px;top:268px;width:107px;height:28.5px;background:#fff;border-bottom:1.500px solid #e91e63;"></div>
<div style="position:absolute;left:1221px;top:268px;width:95px;height:29px;background:#fff;"></div>
<svg style="position:absolute;left:915px;top:278px;" width="14.5" height="9.5" viewBox="0 0 20 16"><g fill="#333"><circle cx="4.3" cy="4.6" r="2.5"/><circle cx="15.7" cy="4.6" r="2.5"/><path d="M0 12.2c0-2.6 1.6-4.3 4.3-4.3 1 0 1.8.3 2.4.8-.9 1-1.4 2.400-1.400 3.900v.7H.9c-.5 0-.9-.4-.9-1.100z"/><path d="M20 12.2c0-2.6-1.6-4.3-4.3-4.3-1 0-1.800.3-2.400.8.9 1 1.400 2.400 1.400 3.900v.7h4.400c.5 0 .9-.4.900-1.100z"/><circle cx="10" cy="4.200" r="3.400"/><path d="M4.300 14.200c0-3.500 2.200-5.800 5.700-5.800s5.700 2.300 5.700 5.800c0 1-.7 1.800-1.700 1.800H6c-1 0-1.700-.8-1.700-1.800z"/></g></svg>
<span class="t" style="left:930.86px;top:275.00px;font-size:12.5px;line-height:16px;color:#333;letter-spacing:0.148px;font-weight:700;">Population</span>
<svg style="position:absolute;left:1025px;top:275px;" width="20" height="13.5" viewBox="0 0 22 14.600"><g fill="#888"><path d="M11 0L22 3.700 11 7.600 0 3.700z"/><path d="M4.900 6.500L11 8.700l6.100-2.200V10c0 1.400-2.700 2.300-6.100 2.300S4.900 11.400 4.900 10z"/><path d="M2.800 4.800l1.600.6-.3 2.600c.5.300.6 1 .1 1.500l.4 5.100H1.900l.5-5.100c-.4-.5-.3-1.200.2-1.500z"/></g></svg>
<span class="t" style="left:1047.78px;top:274.00px;font-size:12.5px;line-height:16px;color:#333;letter-spacing:0.667px;">Academic</span>
<svg style="position:absolute;left:1136px;top:277px;" width="16.5" height="10" viewBox="0 0 20 12"><path fill="#888" fill-rule="evenodd" d="M.6 0h18.800c.3 0 .6.300.6.600v10.800c0 .3-.3.600-.6.600H.6a.6.600 0 01-.6-.6V.6C0 .3.300 0 .6 0zM4 1.500C4 2.900 2.900 4 1.500 4v4C2.900 8 4 9.100 4 10.500h12c0-1.400 1.100-2.500 2.500-2.500V4A2.500 2.500 0 0116 1.500zM10 2.200c1.900 0 3.300 1.700 3.300 3.800S11.900 9.800 10 9.800 6.700 8.100 6.700 6 8.100 2.200 10 2.200zM9.700 3.500l-1.200.9.500.7.600-.4v2.900h-1v.9h2.900v-.9h-.9V3.500z"/></svg>
<span class="t" style="left:1154.57px;top:274.00px;font-size:12.5px;line-height:16px;color:#333;letter-spacing:0.157px;">Revenue</span>
<svg style="position:absolute;left:1238px;top:275.5px;" width="13" height="13" viewBox="0 0 16 16"><path fill="#222" fill-rule="evenodd" d="M6.700 0h2.600l.4 2.100c.5.200 1 .4 1.400.7l1.900-1 1.800 1.800-1.100 1.800c.3.500.5 1 .7 1.500l2 .5v2.500l-2 .5c-.2.500-.4 1-.7 1.500l1.100 1.800-1.800 1.800-1.900-1c-.4.300-.9.500-1.400.7L9.300 16H6.700l-.4-2.100c-.5-.2-1-.4-1.400-.7l-1.900 1-1.800-1.800 1.100-1.800c-.3-.5-.5-1-.7-1.500l-2-.5V6.100l2-.5c.2-.5.400-1 .7-1.500L1.200 2.300 3 .5l1.900 1c.4-.3.900-.5 1.400-.7zM8 5.200a2.800 2.800 0 100 5.600 2.800 2.800 0 000-5.600z"/></svg>
<span class="t" style="left:1256.91px;top:274.00px;font-size:12.5px;line-height:16px;color:#333;letter-spacing:0.461px;">Options</span>
<svg style="position:absolute;left:0;top:0;font-family:'Liberation Sans',sans-serif" width="1347" height="934" viewBox="0 0 1347 934"><path d="M313.500 356.5H946" stroke="#e6e6e6" stroke-width="1"/><path d="M313.500 420.5H946" stroke="#e6e6e6" stroke-width="1"/><path d="M313 484.500H946" stroke="#ccd6eb" stroke-width="1.200"/><path d="M313.500 484.500v9" stroke="#ccd6eb" stroke-width="1"/><rect x="481" y="393.500" width="309" height="91" fill="#7cb5ec"/><circle cx="589.300" cy="560" r="5" fill="#7cb5ec"/><g fill="#555"><rect x="940" y="333.500" width="6" height="2"/><rect x="940" y="337.500" width="6" height="2"/><rect x="940" y="341.500" width="6" height="2"/></g><text x="300.500" y="361" text-anchor="end" font-size="10.500" fill="#222">200</text><text x="300.500" y="425" text-anchor="end" font-size="10.500" fill="#222">100</text><text x="300.500" y="488.700" text-anchor="end" font-size="10.500" fill="#222">0</text><text transform="translate(273.500,420.500) rotate(-90)" text-anchor="middle" font-size="11.500" fill="#222" letter-spacing=".55">Performance</text><text transform="translate(638.300,497.300) rotate(-45)" text-anchor="end" font-size="10.400" fill="#111">2016/2017</text></svg>
<span class="t" style="left:542.10px;top:325.00px;font-size:11px;line-height:14px;color:#111;letter-spacing:0.651px;">Population Performance</span>
<span class="t" style="left:601.18px;top:553.00px;font-size:11px;line-height:14px;color:#111;letter-spacing:-0.430px;font-weight:700;">THIRD</span>
<div style="position:absolute;left:249px;top:588px;width:698px;height:15px;background:#f1f1f1;"></div>
<div style="position:absolute;left:266px;top:588px;width:642px;height:15px;background:#cbcbcb;"></div>
<svg style="position:absolute;left:253px;top:590.3px;" width="7" height="10" viewBox="0 0 7 10"><path d="M5.500 1.200L1.800 5 5.500 8.800" fill="none" stroke="#4d4d4d" stroke-width="2.100"/></svg>
<svg style="position:absolute;left:934px;top:590.3px;" width="7" height="10" viewBox="0 0 7 10"><path d="M1.500 1.200L5.200 5 1.500 8.800" fill="none" stroke="#4d4d4d" stroke-width="2.100"/></svg>
<span class="t" style="left:966.83px;top:324.00px;font-size:12.5px;line-height:16px;color:#333;letter-spacing:0.325px;">Students</span>
<div style="position:absolute;left:955px;top:343px;width:340px;height:6px;background:#eee;"></div>
<div style="position:absolute;left:955px;top:343px;width:233.3px;height:6px;background:#2196f3;"></div>
<svg style="position:absolute;left:955.5px;top:327px;" width="9" height="8.7" viewBox="0 0 9.500 10"><circle cx="4.750" cy="2.700" r="2.500" fill="#2196f3"/><path d="M0 10c0-2.600 1.900-4 4.750-4S9.500 7.400 9.500 10z" fill="#2196f3"/></svg>
<svg style="position:absolute;left:1242.9px;top:326.1px;" width="7.7" height="11.8" viewBox="0 0 8 12"><g fill="#808080"><circle cx="4" cy="1.350" r="1.300"/><path d="M1.800 3h4.400c.8 0 1.300.5 1.300 1.300v3.100H6.300V12H4.200V7.800h-.4V12H1.700V7.400H.500V4.300C.500 3.500 1 3 1.800 3z"/></g></svg>
<span class="t" style="left:1253.02px;top:324.00px;font-size:12px;line-height:16px;color:#333;letter-spacing:1.260px;">56</span>
<svg style="position:absolute;left:1270px;top:326.1px;" width="9.2" height="11.8" viewBox="0 0 9 12"><g fill="#808080"><circle cx="4.500" cy="1.350" r="1.300"/><path d="M3.300 3h2.400c.5 0 .9.300 1.100.8l1.700 3.700-.9.400-1.300-2.600 1.500 3.800H6V12H4.700V9.100h-.4V12H3V9.100H1.200l1.500-3.800-1.300 2.600-.9-.4 1.700-3.700c.2-.5.600-.8 1.100-.8z"/></g></svg>
<span class="t" style="left:1281.12px;top:324.00px;font-size:12px;line-height:16px;color:#333;letter-spacing:1.131px;">42</span>
<span class="t" style="left:966.97px;top:363.00px;font-size:12.5px;line-height:16px;color:#333;letter-spacing:0.400px;">Parents</span>
<div style="position:absolute;left:955px;top:382px;width:340px;height:6px;background:#eee;"></div>
<div style="position:absolute;left:955px;top:382px;width:53.3px;height:6px;background:#ff9800;"></div>
<svg style="position:absolute;left:955px;top:365px;" width="10" height="10.5" viewBox="0 0 10 10.500"><circle cx="5" cy="5" r="4.600" fill="none" stroke="#ff9800" stroke-width="1.200"/><circle cx="5" cy="3.600" r="1.700" fill="#ff9800"/><path d="M2.300 8.300c0-1.800 1.100-2.800 2.700-2.800s2.700 1 2.700 2.800z" fill="#ff9800"/></svg>
<svg style="position:absolute;left:1257.8px;top:365.1px;" width="7.7" height="11.8" viewBox="0 0 8 12"><g fill="#808080"><circle cx="4" cy="1.350" r="1.300"/><path d="M1.800 3h4.400c.8 0 1.300.5 1.300 1.300v3.100H6.300V12H4.200V7.800h-.4V12H1.700V7.400H.500V4.300C.500 3.500 1 3 1.800 3z"/></g></svg>
<span class="t" style="left:1266.69px;top:363.00px;font-size:12px;line-height:16px;color:#333;letter-spacing:-1.700px;transform:scaleX(.8);transform-origin:0 0;">11</span>
<svg style="position:absolute;left:1277.2px;top:365.1px;" width="9.2" height="11.8" viewBox="0 0 9 12"><g fill="#808080"><circle cx="4.500" cy="1.350" r="1.300"/><path d="M3.300 3h2.400c.5 0 .9.300 1.100.8l1.700 3.700-.9.400-1.300-2.600 1.500 3.800H6V12H4.700V9.100h-.4V12H3V9.100H1.200l1.500-3.800-1.300 2.600-.9-.4 1.700-3.700c.2-.5.600-.8 1.100-.8z"/></g></svg>
<span class="t" style="left:1287.59px;top:363.00px;font-size:12px;line-height:16px;color:#333;letter-spacing:-1.700px;transform:scaleX(.8);transform-origin:0 0;">11</span>
<span class="t" style="left:967.12px;top:402.00px;font-size:12.5px;line-height:16px;color:#333;letter-spacing:0.445px;">Teachers</span>
<div style="position:absolute;left:955px;top:421px;width:340px;height:6px;background:#eee;"></div>
<div style="position:absolute;left:955px;top:421px;width:46.3px;height:6px;background:#2e6b31;"></div>
<svg style="position:absolute;left:955.5px;top:405px;" width="9" height="8.7" viewBox="0 0 9.500 10"><circle cx="4.750" cy="2.700" r="2.500" fill="#2e6b31"/><path d="M0 10c0-2.600 1.900-4 4.750-4S9.500 7.400 9.500 10z" fill="#2e6b31"/></svg>
<svg style="position:absolute;left:1253.5px;top:404.1px;" width="7.7" height="11.8" viewBox="0 0 8 12"><g fill="#808080"><circle cx="4" cy="1.350" r="1.300"/><path d="M1.800 3h4.400c.8 0 1.300.5 1.300 1.300v3.100H6.300V12H4.200V7.800h-.4V12H1.700V7.400H.500V4.300C.500 3.500 1 3 1.800 3z"/></g></svg>
<span class="t" style="left:1262.59px;top:402.00px;font-size:12px;line-height:16px;color:#333;letter-spacing:-2.106px;">13</span>
<svg style="position:absolute;left:1276.5px;top:404.1px;" width="9.2" height="11.8" viewBox="0 0 9 12"><g fill="#808080"><circle cx="4.500" cy="1.350" r="1.300"/><path d="M3.300 3h2.400c.5 0 .9.300 1.100.8l1.700 3.700-.9.400-1.300-2.600 1.500 3.800H6V12H4.700V9.100h-.4V12H3V9.100H1.200l1.500-3.800-1.300 2.600-.9-.4 1.700-3.700c.2-.5.600-.8 1.100-.8z"/></g></svg>
<span class="t" style="left:1287.89px;top:402.00px;font-size:12px;line-height:16px;color:#333;">6</span>
<span class="t" style="left:964.47px;top:441.00px;font-size:12.5px;line-height:16px;color:#333;letter-spacing:0.699px;">Managers</span>
<div style="position:absolute;left:955px;top:460px;width:340px;height:6px;background:#eee;"></div>
<div style="position:absolute;left:955px;top:460px;width:10.3px;height:6px;background:#9c27b0;"></div>
<svg style="position:absolute;left:955.5px;top:444px;" width="7" height="8.8" viewBox="0 0 7.500 10"><circle cx="3.750" cy="2.300" r="2.100" fill="#9c27b0"/><path d="M2.900 4h1.700v3.300l2.900 1V10H0V8.300l2.900-1z" fill="#9c27b0"/></svg>
<svg style="position:absolute;left:1260.5px;top:443.1px;" width="7.7" height="11.8" viewBox="0 0 8 12"><g fill="#808080"><circle cx="4" cy="1.350" r="1.300"/><path d="M1.800 3h4.400c.8 0 1.300.5 1.300 1.300v3.100H6.300V12H4.200V7.800h-.4V12H1.700V7.400H.500V4.300C.500 3.500 1 3 1.800 3z"/></g></svg>
<span class="t" style="left:1269.59px;top:441.00px;font-size:12px;line-height:16px;color:#333;">1</span>
<svg style="position:absolute;left:1276.5px;top:443.1px;" width="9.2" height="11.8" viewBox="0 0 9 12"><g fill="#808080"><circle cx="4.500" cy="1.350" r="1.300"/><path d="M3.300 3h2.400c.5 0 .9.300 1.100.8l1.700 3.700-.9.400-1.300-2.600 1.500 3.800H6V12H4.700V9.100h-.4V12H3V9.100H1.200l1.500-3.800-1.300 2.600-.9-.4 1.700-3.700c.2-.5.600-.8 1.100-.8z"/></g></svg>
<span class="t" style="left:1288.04px;top:441.00px;font-size:12px;line-height:16px;color:#333;">3</span>
<div style="position:absolute;left:954.8px;top:494px;width:340.5px;height:73.5px;background:#fff;border:1px solid #e6e6e6;border-radius:2px;box-shadow:1px 1px 1px rgba(0,0,0,.12);box-sizing:border-box;"></div>
<div style="position:absolute;left:979px;top:507.5px;width:45px;height:44.5px;border-radius:50%;background:#2b83ea;"></div>
<svg style="position:absolute;left:989px;top:521px;" width="25" height="17.3" viewBox="0 0 32 21"><g fill="#fff"><path d="M6.500 3.500c1.800 0 2.900 1.400 2.900 3.300 0 1.600-.6 3-1.500 3.700v1.300l3 1.400v3.600H0v-3.300c0-.8.400-1.300 1.100-1.600l3.300-1.400v-1c-.9-.7-1.500-2.100-1.500-3.700 0-1.900 1.500-3.300 3.600-2.300zM25.500 3.500c-1.800 0-2.900 1.400-2.900 3.300 0 1.600.6 3 1.500 3.700v1.300l-3 1.400v3.600H32v-3.300c0-.8-.4-1.300-1.100-1.600l-3.300-1.400v-1c.9-.7 1.500-2.100 1.500-3.700 0-1.900-1.500-3.300-3.600-2.300z"/><path d="M16 0c3.200 0 5 2.300 5 5.400 0 2.600-1 4.900-2.400 6v2l5.800 2.500c1 .5 1.600 1.300 1.600 2.400V21H6v-2.700c0-1.100.6-1.900 1.600-2.400l5.800-2.500v-2C12 10.300 11 8 11 5.400 11 2.300 12.800 0 16 0z" stroke="#2b83ea" stroke-width=".9"/></g></svg>
<span class="t" style="left:1134.96px;top:508.00px;font-size:21.5px;line-height:28px;color:#3b78b8;letter-spacing:1.805px;">143</span>
<span class="t" style="left:1113.10px;top:532.00px;font-size:11px;line-height:14px;color:#999;letter-spacing:1.801px;">POPULATION</span>
<div style="position:absolute;left:1266px;top:493px;width:25.3px;height:17.5px;background:#ff5b57;"></div>
<div style="position:absolute;left:227px;top:654px;width:1088px;height:278px;background:#fff;border:1px solid #c4c4c4;"></div>
<div style="position:absolute;left:228px;top:655px;width:1088px;height:28px;background:#fafafa;"></div>
<span class="t" style="left:232.15px;top:659.00px;font-size:16.5px;line-height:22px;color:#444;letter-spacing:0.024px;">Best Students (2016/2017)</span>
<div style="position:absolute;left:1159px;top:654px;width:158px;height:28px;background:#fff;border:1px solid #ccc;box-sizing:border-box;"></div>
<div style="position:absolute;left:1266px;top:654px;width:51px;height:28px;background:#e6e6e6;border:1px solid #adadad;box-sizing:border-box;box-shadow:inset 0 2px 3px rgba(0,0,0,.12);"></div>
<div style="position:absolute;left:1204px;top:654px;width:1px;height:28px;background:#ccc;"></div>
<span class="t" style="left:1168.18px;top:661.50px;font-size:10px;line-height:14px;color:#333;letter-spacing:-0.559px;">FIRST</span>
<span class="t" style="left:1213.55px;top:661.50px;font-size:10px;line-height:14px;color:#333;letter-spacing:0.230px;">SECOND</span>
<span class="t" style="left:1276.38px;top:661.50px;font-size:10px;line-height:14px;color:#333;letter-spacing:-0.187px;">THIRD</span>
<div style="position:absolute;left:405.8px;top:683px;width:1px;height:234px;background:#e9e9e9;"></div>
<div style="position:absolute;left:585.4px;top:683px;width:1px;height:234px;background:#e9e9e9;"></div>
<div style="position:absolute;left:765.0px;top:683px;width:1px;height:234px;background:#e9e9e9;"></div>
<div style="position:absolute;left:943.7px;top:683px;width:1px;height:234px;background:#e9e9e9;"></div>
<div style="position:absolute;left:1123.4px;top:683px;width:1px;height:234px;background:#e9e9e9;"></div>
<div style="position:absolute;left:1301.8px;top:683px;width:1px;height:234px;background:#e9e9e9;"></div>
<div style="position:absolute;left:228px;top:887px;width:1088px;height:1px;background:#e2e2e2;"></div>
<svg style="position:absolute;left:272.35px;top:688.9px;" width="15.2" height="19.5" viewBox="0 0 15.200 19.500"><g fill="#f44336"><path d="M2.300 0H12.900L15.200 4.500 11.700 8.800H3.500L0 4.500z"/><circle cx="7.600" cy="13.800" r="5.650"/></g><path d="M4.400.600L7.600 6.200 10.800.600" fill="none" stroke="#fff" stroke-width=".55" opacity=".9"/><path d="M7.600 5.100l1 1.500-1 1.500-1-1.500z" fill="#fff" opacity=".9"/><circle cx="7.600" cy="13.800" r="4.300" fill="none" stroke="#fff" stroke-width=".45" opacity=".7"/></svg>
<svg style="position:absolute;left:292.65000000000003px;top:688.7px;" width="20" height="19.5" viewBox="0 0 20 19.500"><path fill="#2196f3" d="M4.100 0H15.900C15.900 5 15.200 9.500 12.600 12 11.600 13 10.900 13.600 10.900 14.600V15.500C10.900 16.800 12.500 17.900 15.500 18.200V19.400H4.500V18.200C7.500 17.900 9.100 16.800 9.100 15.500V14.600C9.100 13.600 8.400 13 7.400 12 4.800 9.500 4.100 5 4.100 0z"/><path fill="none" stroke="#2196f3" stroke-width="1.600" d="M4.300 3.400H.800C.800 7.500 3 10.600 6.800 11.600M15.700 3.400H19.200C19.200 7.500 17 10.600 13.200 11.600"/></svg>
<svg style="position:absolute;left:317.95000000000005px;top:688.7px;" width="20" height="19.5" viewBox="0 0 20 19.500"><path fill="#2196f3" d="M4.100 0H15.900C15.900 5 15.200 9.500 12.600 12 11.600 13 10.900 13.600 10.900 14.600V15.500C10.900 16.800 12.500 17.900 15.500 18.200V19.400H4.500V18.200C7.500 17.900 9.100 16.800 9.100 15.500V14.600C9.100 13.600 8.400 13 7.400 12 4.800 9.500 4.100 5 4.100 0z"/><path fill="none" stroke="#2196f3" stroke-width="1.600" d="M4.300 3.400H.800C.800 7.500 3 10.600 6.800 11.600M15.700 3.400H19.200C19.200 7.500 17 10.600 13.200 11.600"/></svg>
<svg style="position:absolute;left:343.25000000000006px;top:688.7px;" width="20" height="19.5" viewBox="0 0 20 19.500"><path fill="#2196f3" d="M4.100 0H15.900C15.900 5 15.200 9.500 12.600 12 11.600 13 10.900 13.600 10.900 14.600V15.500C10.900 16.800 12.500 17.900 15.500 18.200V19.400H4.500V18.200C7.500 17.900 9.100 16.800 9.100 15.500V14.600C9.100 13.600 8.400 13 7.400 12 4.800 9.500 4.100 5 4.100 0z"/><path fill="none" stroke="#2196f3" stroke-width="1.600" d="M4.300 3.400H.800C.800 7.500 3 10.600 6.800 11.600M15.700 3.400H19.200C19.200 7.500 17 10.600 13.200 11.600"/></svg>
<div style="position:absolute;left:263.8px;top:715px;width:107px;height:107px;border-radius:54px 54px 0 54px;background:#d0d0d0;overflow:hidden"><svg width="107" height="107" viewBox="0 0 107 107" style="position:absolute;left:0;top:0"><path d="M52.400 6.200C58 6 63 8 66 10.500 72 12 77 16 78.500 23 79.500 30 79 37 78 43.500 80.500 44.500 80.500 50 78 52 77 57 75 61 72.300 64.600 70.500 67.500 69 70 68.500 72.300V83C72 88 78 90 83.300 91.600 89 93.500 93 95.500 96.100 98 100 101 102 104 103.200 107H30C26 103 24 99 22.200 94.800 30 92 37 89 41.500 83.900V72.300C41 70 39.500 67.500 37 64.600 34 61 32.500 57 31.500 52 29 50 29 44.500 31 43.500 30 37 29.800 30 30.600 23.500 31.500 17 33 14 36 11.500 40 8 46 6.300 52.400 6.200z" fill="#a9a9a9"/></svg></div>
<span class="t" style="left:263.85px;top:839.00px;font-size:14px;line-height:18px;color:#444;letter-spacing:-0.371px;">NNALUE HENRY</span>
<span class="t" style="left:285.17px;top:860.00px;font-size:11.25px;line-height:16px;color:#1a7bcf;letter-spacing:-0.454px;font-weight:700;">THIRD TERM</span>
<span class="t" style="left:240.80px;top:894.50px;font-size:14.5px;line-height:19px;color:#333;letter-spacing:-0.078px">1<span style="font-size:10.5px;font-weight:700;color:#f44336;position:relative;top:-5.500px">best</span>/89.8</span>
<div style="position:absolute;left:314px;top:900px;width:81px;height:10px;background:#eee;border-radius:5px;"></div>
<div style="position:absolute;left:314px;top:900px;width:72.30000000000001px;height:10px;background:#8fb990;border-radius:5px;"></div>
<svg style="position:absolute;left:461.2px;top:688.7px;" width="20" height="19.5" viewBox="0 0 20 19.500"><path fill="#2196f3" d="M4.100 0H15.900C15.900 5 15.200 9.500 12.600 12 11.600 13 10.900 13.600 10.900 14.600V15.500C10.900 16.800 12.500 17.900 15.500 18.200V19.400H4.500V18.200C7.500 17.900 9.100 16.800 9.100 15.500V14.600C9.100 13.600 8.400 13 7.400 12 4.800 9.500 4.100 5 4.100 0z"/><path fill="none" stroke="#2196f3" stroke-width="1.600" d="M4.300 3.400H.800C.800 7.500 3 10.600 6.800 11.600M15.700 3.400H19.200C19.200 7.500 17 10.600 13.200 11.600"/></svg>
<svg style="position:absolute;left:486.5px;top:688.7px;" width="20" height="19.5" viewBox="0 0 20 19.500"><path fill="#2196f3" d="M4.100 0H15.900C15.900 5 15.200 9.500 12.600 12 11.600 13 10.900 13.600 10.900 14.600V15.500C10.900 16.800 12.500 17.900 15.500 18.200V19.400H4.500V18.200C7.500 17.900 9.100 16.800 9.100 15.500V14.600C9.100 13.600 8.400 13 7.400 12 4.800 9.500 4.100 5 4.100 0z"/><path fill="none" stroke="#2196f3" stroke-width="1.600" d="M4.300 3.400H.800C.800 7.500 3 10.600 6.800 11.600M15.700 3.400H19.200C19.200 7.500 17 10.600 13.200 11.600"/></svg>
<svg style="position:absolute;left:511.8px;top:688.7px;" width="20" height="19.5" viewBox="0 0 20 19.500"><path fill="#2196f3" d="M4.100 0H15.900C15.900 5 15.200 9.500 12.600 12 11.600 13 10.900 13.600 10.900 14.600V15.500C10.900 16.800 12.500 17.900 15.500 18.200V19.400H4.500V18.200C7.500 17.900 9.100 16.800 9.100 15.500V14.600C9.100 13.600 8.400 13 7.400 12 4.800 9.500 4.100 5 4.100 0z"/><path fill="none" stroke="#2196f3" stroke-width="1.600" d="M4.300 3.400H.800C.800 7.500 3 10.600 6.800 11.600M15.700 3.400H19.200C19.200 7.500 17 10.600 13.200 11.600"/></svg>
<div style="position:absolute;left:443.0px;top:715px;width:107px;height:107px;border-radius:54px 54px 0 54px;background:#d0d0d0;overflow:hidden"><svg width="107" height="107" viewBox="0 0 107 107" style="position:absolute;left:0;top:0"><path d="M52.400 6.200C58 6 63 8 66 10.500 72 12 77 16 78.500 23 79.500 30 79 37 78 43.500 80.500 44.500 80.500 50 78 52 77 57 75 61 72.300 64.600 70.500 67.500 69 70 68.500 72.300V83C72 88 78 90 83.300 91.600 89 93.500 93 95.500 96.100 98 100 101 102 104 103.200 107H30C26 103 24 99 22.200 94.800 30 92 37 89 41.500 83.900V72.300C41 70 39.500 67.500 37 64.600 34 61 32.500 57 31.500 52 29 50 29 44.500 31 43.500 30 37 29.800 30 30.600 23.500 31.500 17 33 14 36 11.500 40 8 46 6.300 52.400 6.200z" fill="#a9a9a9"/></svg></div>
<span class="t" style="left:446.54px;top:839.00px;font-size:14px;line-height:18px;color:#444;letter-spacing:-0.035px;">VALIANT EDEM</span>
<span class="t" style="left:453.64px;top:860.00px;font-size:11.25px;line-height:16px;color:#1a7bcf;letter-spacing:0.525px;font-weight:700;">dove (Nursery)</span>
<span class="t" style="left:426.70px;top:894.50px;font-size:14.5px;line-height:19px;color:#333;letter-spacing:-0.264px">1<span style="font-size:10.5px;font-weight:700;color:#2196f3;position:relative;top:-5.500px">st</span>/85.4</span>
<div style="position:absolute;left:492.3px;top:900px;width:81.99999999999994px;height:10px;background:#eee;border-radius:5px;"></div>
<div style="position:absolute;left:492.3px;top:900px;width:69.49999999999994px;height:10px;background:#8fb990;border-radius:5px;"></div>
<svg style="position:absolute;left:640.2px;top:688.7px;" width="20" height="19.5" viewBox="0 0 20 19.500"><path fill="#2196f3" d="M4.100 0H15.900C15.900 5 15.200 9.500 12.600 12 11.600 13 10.900 13.600 10.900 14.600V15.500C10.900 16.800 12.500 17.900 15.500 18.200V19.400H4.500V18.200C7.500 17.900 9.100 16.800 9.100 15.500V14.600C9.100 13.600 8.400 13 7.400 12 4.800 9.500 4.100 5 4.100 0z"/><path fill="none" stroke="#2196f3" stroke-width="1.600" d="M4.300 3.400H.800C.800 7.500 3 10.600 6.800 11.600M15.700 3.400H19.200C19.200 7.500 17 10.600 13.200 11.600"/></svg>
<svg style="position:absolute;left:665.5px;top:688.7px;" width="20" height="19.5" viewBox="0 0 20 19.500"><path fill="#2196f3" d="M4.100 0H15.900C15.900 5 15.200 9.500 12.600 12 11.600 13 10.900 13.600 10.900 14.600V15.500C10.900 16.800 12.500 17.900 15.500 18.200V19.400H4.500V18.200C7.500 17.900 9.100 16.800 9.100 15.500V14.600C9.100 13.600 8.400 13 7.400 12 4.800 9.500 4.100 5 4.100 0z"/><path fill="none" stroke="#2196f3" stroke-width="1.600" d="M4.300 3.400H.800C.800 7.500 3 10.600 6.800 11.600M15.700 3.400H19.200C19.200 7.500 17 10.600 13.200 11.600"/></svg>
<svg style="position:absolute;left:690.8px;top:688.7px;" width="20" height="19.5" viewBox="0 0 20 19.500"><path fill="#2196f3" d="M4.100 0H15.900C15.900 5 15.200 9.500 12.600 12 11.600 13 10.900 13.600 10.900 14.600V15.500C10.900 16.800 12.500 17.900 15.500 18.200V19.400H4.500V18.200C7.500 17.900 9.100 16.800 9.100 15.500V14.600C9.100 13.600 8.400 13 7.400 12 4.800 9.500 4.100 5 4.100 0z"/><path fill="none" stroke="#2196f3" stroke-width="1.600" d="M4.300 3.400H.800C.800 7.500 3 10.600 6.800 11.600M15.700 3.400H19.200C19.200 7.500 17 10.600 13.200 11.600"/></svg>
<div style="position:absolute;left:622.0px;top:715px;width:107px;height:107px;border-radius:54px 54px 0 54px;background:#d0d0d0;overflow:hidden"><svg width="107" height="107" viewBox="0 0 107 107" style="position:absolute;left:0;top:0"><path d="M52.400 6.200C58 6 63 8 66 10.500 72 12 77 16 78.500 23 79.500 30 79 37 78 43.500 80.500 44.500 80.500 50 78 52 77 57 75 61 72.300 64.600 70.500 67.500 69 70 68.500 72.300V83C72 88 78 90 83.300 91.600 89 93.500 93 95.500 96.100 98 100 101 102 104 103.200 107H30C26 103 24 99 22.200 94.800 30 92 37 89 41.500 83.900V72.300C41 70 39.500 67.500 37 64.600 34 61 32.500 57 31.500 52 29 50 29 44.500 31 43.500 30 37 29.800 30 30.600 23.500 31.500 17 33 14 36 11.500 40 8 46 6.300 52.400 6.200z" fill="#a9a9a9"/></svg></div>
<span class="t" style="left:609.75px;top:839.00px;font-size:14px;line-height:18px;color:#444;letter-spacing:-0.441px;">PRECIOUS A.LEVITE</span>
<span class="t" style="left:626.30px;top:860.00px;font-size:11.25px;line-height:16px;color:#1a7bcf;letter-spacing:0.475px;font-weight:700;">sport A (Primary)</span>
<span class="t" style="left:605.40px;top:894.50px;font-size:14.5px;line-height:19px;color:#333;letter-spacing:-0.250px">1<span style="font-size:10.5px;font-weight:700;color:#2196f3;position:relative;top:-5.500px">st</span>/85.8</span>
<div style="position:absolute;left:672.4px;top:900px;width:81.10000000000002px;height:10px;background:#eee;border-radius:5px;"></div>
<div style="position:absolute;left:672.4px;top:900px;width:68.60000000000002px;height:10px;background:#8fb990;border-radius:5px;"></div>
<svg style="position:absolute;left:832.45px;top:688.7px;" width="20" height="19.5" viewBox="0 0 20 19.500"><path fill="#ffa000" d="M4.100 0H15.900C15.900 5 15.200 9.500 12.600 12 11.600 13 10.900 13.600 10.900 14.600V15.500C10.900 16.800 12.500 17.900 15.500 18.200V19.400H4.500V18.200C7.500 17.900 9.100 16.800 9.100 15.500V14.600C9.100 13.600 8.400 13 7.400 12 4.800 9.500 4.100 5 4.100 0z"/><path fill="none" stroke="#ffa000" stroke-width="1.600" d="M4.300 3.400H.800C.800 7.500 3 10.600 6.800 11.600M15.700 3.400H19.200C19.200 7.500 17 10.600 13.200 11.600"/></svg>
<svg style="position:absolute;left:857.75px;top:688.7px;" width="20" height="19.5" viewBox="0 0 20 19.500"><path fill="#ffa000" d="M4.100 0H15.900C15.900 5 15.200 9.500 12.600 12 11.600 13 10.900 13.600 10.900 14.600V15.500C10.900 16.800 12.500 17.900 15.500 18.200V19.400H4.500V18.200C7.500 17.900 9.100 16.800 9.100 15.500V14.600C9.100 13.600 8.400 13 7.400 12 4.800 9.500 4.100 5 4.100 0z"/><path fill="none" stroke="#ffa000" stroke-width="1.600" d="M4.300 3.400H.800C.800 7.500 3 10.600 6.800 11.600M15.700 3.400H19.200C19.200 7.500 17 10.600 13.200 11.600"/></svg>
<div style="position:absolute;left:801.6px;top:715px;width:107px;height:107px;border-radius:54px 54px 0 54px;background:#d0d0d0;overflow:hidden"><svg width="107" height="107" viewBox="0 0 107 107" style="position:absolute;left:0;top:0"><path d="M54.3 2.3C62 2.3 69 5 73.6 9.4 78 13.5 80.500 17 82 20.9 84.500 28 85.300 37 85.800 46.600 86.300 55 87 62 88.400 69.100 87.500 71.500 85.500 72.800 82.600 73.600 78.500 75 74 76 69.800 76.800 68.500 77.500 68.300 78.800 68.500 80 70 83.500 73 85.500 76.200 87.100 81 89.300 86.500 91 91.600 92.900 95.500 94.500 98.500 96.500 100.600 99.300 102.800 101.700 104.500 104 105.700 107H30C27 103 23.500 98 20.900 93.500 27 91.500 32.500 88.500 36.400 85.200 39.500 83.500 41.500 82 42.100 80 42.300 78.800 42 77.500 40.200 76.800 36 76 31.500 75 27.400 73.600 24.500 72.800 22.500 71.500 21.600 69.100 23.200 62 24.300 55 24.800 46.600 25.300 37 26.200 28 28.700 20.900 30.200 17 32.500 13.500 36.400 9.400 41 5 47.500 2.300 54.300 2.300z" fill="#a9a9a9"/></svg></div>
<span class="t" style="left:785.15px;top:839.00px;font-size:14px;line-height:18px;color:#444;">MARTHA M.DELIGHT</span>
<span class="t" style="left:806.10px;top:860.00px;font-size:11.25px;line-height:16px;color:#1a7bcf;letter-spacing:0.475px;font-weight:700;">sport A (Primary)</span>
<span class="t" style="left:781.30px;top:894.50px;font-size:14.5px;line-height:19px;color:#333;letter-spacing:0.223px">2<span style="font-size:10.5px;font-weight:700;color:#ffa000;position:relative;top:-5.500px">nd</span>/80.2</span>
<div style="position:absolute;left:851.5px;top:900px;width:80.89999999999998px;height:10px;background:#eee;border-radius:5px;"></div>
<div style="position:absolute;left:851.5px;top:900px;width:64.5px;height:10px;background:#337ab7;border-radius:5px;"></div>
<svg style="position:absolute;left:998.7px;top:688.7px;" width="20" height="19.5" viewBox="0 0 20 19.500"><path fill="#2196f3" d="M4.100 0H15.900C15.900 5 15.200 9.500 12.600 12 11.600 13 10.900 13.600 10.900 14.600V15.500C10.900 16.800 12.500 17.900 15.500 18.200V19.400H4.500V18.200C7.500 17.900 9.100 16.800 9.100 15.500V14.600C9.100 13.600 8.400 13 7.400 12 4.800 9.500 4.100 5 4.100 0z"/><path fill="none" stroke="#2196f3" stroke-width="1.600" d="M4.300 3.400H.800C.800 7.500 3 10.600 6.800 11.600M15.700 3.400H19.200C19.200 7.500 17 10.600 13.200 11.600"/></svg>
<svg style="position:absolute;left:1024.0px;top:688.7px;" width="20" height="19.5" viewBox="0 0 20 19.500"><path fill="#2196f3" d="M4.100 0H15.900C15.900 5 15.200 9.500 12.600 12 11.600 13 10.900 13.600 10.900 14.600V15.500C10.900 16.800 12.500 17.900 15.500 18.200V19.400H4.500V18.200C7.500 17.900 9.100 16.800 9.100 15.500V14.600C9.100 13.600 8.400 13 7.400 12 4.800 9.500 4.100 5 4.100 0z"/><path fill="none" stroke="#2196f3" stroke-width="1.600" d="M4.300 3.400H.800C.800 7.500 3 10.600 6.800 11.600M15.700 3.400H19.200C19.200 7.500 17 10.600 13.200 11.600"/></svg>
<svg style="position:absolute;left:1049.3px;top:688.7px;" width="20" height="19.5" viewBox="0 0 20 19.500"><path fill="#2196f3" d="M4.100 0H15.900C15.900 5 15.200 9.500 12.600 12 11.600 13 10.900 13.600 10.900 14.600V15.500C10.900 16.800 12.500 17.900 15.500 18.200V19.400H4.500V18.200C7.500 17.900 9.100 16.800 9.100 15.500V14.600C9.100 13.600 8.400 13 7.400 12 4.800 9.500 4.100 5 4.100 0z"/><path fill="none" stroke="#2196f3" stroke-width="1.600" d="M4.300 3.400H.800C.800 7.500 3 10.600 6.800 11.600M15.700 3.400H19.200C19.200 7.500 17 10.600 13.200 11.600"/></svg>
<div style="position:absolute;left:980.5px;top:715px;width:107px;height:107px;border-radius:54px 54px 0 54px;background:#d0d0d0;overflow:hidden"><svg width="107" height="107" viewBox="0 0 107 107" style="position:absolute;left:0;top:0"><path d="M52.400 6.200C58 6 63 8 66 10.500 72 12 77 16 78.500 23 79.500 30 79 37 78 43.500 80.500 44.500 80.500 50 78 52 77 57 75 61 72.300 64.600 70.500 67.500 69 70 68.500 72.300V83C72 88 78 90 83.300 91.600 89 93.500 93 95.500 96.100 98 100 101 102 104 103.200 107H30C26 103 24 99 22.200 94.800 30 92 37 89 41.500 83.900V72.300C41 70 39.500 67.500 37 64.600 34 61 32.500 57 31.500 52 29 50 29 44.500 31 43.500 30 37 29.800 30 30.600 23.500 31.500 17 33 14 36 11.500 40 8 46 6.300 52.400 6.200z" fill="#a9a9a9"/></svg></div>
<span class="t" style="left:975.92px;top:839.00px;font-size:14px;line-height:18px;color:#444;letter-spacing:0.115px;">UKPONG UDUAK</span>
<span class="t" style="left:993.63px;top:860.00px;font-size:11.25px;line-height:16px;color:#1a7bcf;letter-spacing:-0.130px;font-weight:700;">JSS 1A (Junior)</span>
<span class="t" style="left:965.20px;top:894.50px;font-size:14.5px;line-height:19px;color:#333;letter-spacing:-0.664px">1<span style="font-size:10.5px;font-weight:700;color:#2196f3;position:relative;top:-5.500px">st</span>/77.4</span>
<div style="position:absolute;left:1030.4px;top:900px;width:80.79999999999995px;height:10px;background:#eee;border-radius:5px;"></div>
<div style="position:absolute;left:1030.4px;top:900px;width:63.09999999999991px;height:10px;background:#337ab7;border-radius:5px;"></div>
<svg style="position:absolute;left:1190.25px;top:688.7px;" width="20" height="19.5" viewBox="0 0 20 19.500"><path fill="#ffa000" d="M4.100 0H15.900C15.900 5 15.200 9.500 12.600 12 11.600 13 10.900 13.600 10.900 14.600V15.500C10.900 16.800 12.500 17.900 15.500 18.200V19.400H4.500V18.200C7.500 17.900 9.100 16.800 9.100 15.500V14.600C9.100 13.600 8.400 13 7.400 12 4.800 9.500 4.100 5 4.100 0z"/><path fill="none" stroke="#ffa000" stroke-width="1.600" d="M4.300 3.400H.800C.800 7.500 3 10.600 6.800 11.600M15.700 3.400H19.200C19.200 7.500 17 10.600 13.200 11.600"/></svg>
<svg style="position:absolute;left:1215.55px;top:688.7px;" width="20" height="19.5" viewBox="0 0 20 19.500"><path fill="#ffa000" d="M4.100 0H15.900C15.900 5 15.200 9.500 12.600 12 11.600 13 10.900 13.600 10.900 14.600V15.500C10.900 16.800 12.500 17.900 15.500 18.200V19.400H4.500V18.200C7.500 17.900 9.100 16.800 9.100 15.500V14.600C9.100 13.600 8.400 13 7.400 12 4.800 9.500 4.100 5 4.100 0z"/><path fill="none" stroke="#ffa000" stroke-width="1.600" d="M4.300 3.400H.800C.800 7.500 3 10.600 6.800 11.600M15.700 3.400H19.200C19.200 7.500 17 10.600 13.200 11.600"/></svg>
<div style="position:absolute;left:1159.4px;top:715px;width:107px;height:107px;border-radius:54px 54px 0 54px;background:#d0d0d0;overflow:hidden"><svg width="107" height="107" viewBox="0 0 107 107" style="position:absolute;left:0;top:0"><path d="M52.400 6.200C58 6 63 8 66 10.500 72 12 77 16 78.500 23 79.500 30 79 37 78 43.500 80.500 44.500 80.500 50 78 52 77 57 75 61 72.300 64.600 70.500 67.500 69 70 68.500 72.300V83C72 88 78 90 83.300 91.600 89 93.500 93 95.500 96.100 98 100 101 102 104 103.200 107H30C26 103 24 99 22.200 94.800 30 92 37 89 41.500 83.900V72.300C41 70 39.500 67.500 37 64.600 34 61 32.500 57 31.500 52 29 50 29 44.500 31 43.500 30 37 29.800 30 30.600 23.500 31.500 17 33 14 36 11.500 40 8 46 6.300 52.400 6.200z" fill="#a9a9a9"/></svg></div>
<span class="t" style="left:1153.45px;top:839.00px;font-size:14px;line-height:18px;color:#444;letter-spacing:-0.276px;">BASSEY EFFIONG</span>
<span class="t" style="left:1172.13px;top:860.00px;font-size:11.25px;line-height:16px;color:#1a7bcf;letter-spacing:-0.073px;font-weight:700;">JSS 1A (Junior)</span>
<span class="t" style="left:1140.70px;top:894.50px;font-size:14.5px;line-height:19px;color:#333;letter-spacing:-0.020px">2<span style="font-size:10.5px;font-weight:700;color:#ffa000;position:relative;top:-5.500px">nd</span>/75.3</span>
<div style="position:absolute;left:1209.3px;top:900px;width:80.79999999999995px;height:10px;background:#eee;border-radius:5px;"></div>
<div style="position:absolute;left:1209.3px;top:900px;width:61.0px;height:10px;background:#337ab7;border-radius:5px;"></div>
<div style="position:absolute;left:228px;top:917px;width:1088px;height:16px;background:#f1f1f1;"></div>
<div style="position:absolute;left:245px;top:917px;width:371px;height:16px;background:#cbcbcb;"></div>
<svg style="position:absolute;left:232px;top:919.5px;" width="7" height="10" viewBox="0 0 7 10"><path d="M5.500 1.200L1.800 5 5.500 8.800" fill="none" stroke="#4d4d4d" stroke-width="2.100"/></svg>
<svg style="position:absolute;left:1304px;top:919.5px;" width="7" height="10" viewBox="0 0 7 10"><path d="M1.500 1.200L5.200 5 1.500 8.800" fill="none" stroke="#4d4d4d" stroke-width="2.100"/></svg>
</div></body></html>
